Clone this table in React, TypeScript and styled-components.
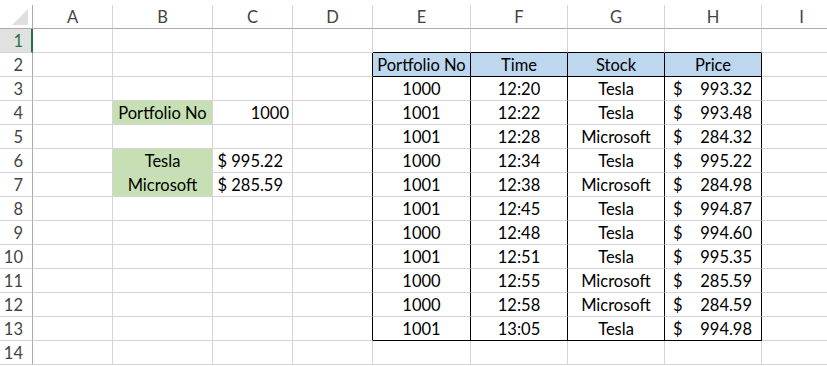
import React from "react";
import styled, { createGlobalStyle } from "styled-components";

const GREEN = "#c6e0b4";
const BLUE = "#bdd7ee";
const GRID = "#d4d4d4";
const HEAD_LINE = "#ababab";

const GlobalStyle = createGlobalStyle`
  html, body {
    margin: 0;
    padding: 0;
    background: #ffffff;
    overflow: hidden;
  }
  body {
    font-family: Lato, "Liberation Sans", sans-serif;
  }
`;

const columns = [
  { name: "A", w: 80 },
  { name: "B", w: 100 },
  { name: "C", w: 80 },
  { name: "D", w: 80 },
  { name: "E", w: 98 },
  { name: "F", w: 97 },
  { name: "G", w: 97 },
  { name: "H", w: 97 },
  { name: "I", w: 80 },
];

const ROW_COUNT = 14;

const Sheet = styled.div`
  display: grid;
  grid-template-columns: 33px ${columns.map((c) => `${c.w}px`).join(" ")};
  grid-auto-rows: 24px;
  margin-top: 5px;
  width: max-content;
  color: #000;
  font-size: 16.5px;
`;

const Corner = styled.div`
  position: relative;
  border-right: 1px solid ${HEAD_LINE};
  border-bottom: 1px solid ${HEAD_LINE};
  box-sizing: border-box;
  &::after {
    content: "";
    position: absolute;
    right: 4px;
    bottom: 3px;
    width: 0;
    height: 0;
    border-left: 16px solid transparent;
    border-bottom: 16px solid #dfdfdf;
  }
`;

const ColHeader = styled.div`
  box-sizing: border-box;
  border-right: 1px solid ${GRID};
  border-bottom: 1px solid ${HEAD_LINE};
  display: flex;
  align-items: center;
  justify-content: center;
  color: #444;
  padding-top: 1px;
`;

const RowHeader = styled.div<{ $active?: boolean }>`
  box-sizing: border-box;
  border-right: ${(p) => (p.$active ? "2px solid #217346" : `1px solid ${HEAD_LINE}`)};
  border-bottom: 1px solid ${GRID};
  background: ${(p) => (p.$active ? "#e1e1e1" : "transparent")};
  color: ${(p) => (p.$active ? "#217346" : "#444")};
  display: flex;
  align-items: center;
  justify-content: flex-end;
  padding-right: ${(p) => (p.$active ? "8px" : "9px")};
  padding-top: 1px;
`;

const Cell = styled.div<{
  $fill?: string;
  $align?: "left" | "center" | "right";
  $padRight?: number;
  $right: boolean;
  $bottom: boolean;
}>`
  box-sizing: border-box;
  border-right: 1px solid ${(p) => (p.$right ? "#000" : GRID)};
  border-bottom: 1px solid ${(p) => (p.$bottom ? "#000" : GRID)};
  background: ${(p) => p.$fill || "transparent"};
  display: flex;
  align-items: center;
  justify-content: ${(p) =>
    p.$align === "center" ? "center" : p.$align === "right" ? "flex-end" : "flex-start"};
  padding: 1px ${(p) => p.$padRight ?? 3}px 0 3px;
  white-space: nowrap;
  overflow: hidden;
`;

const Money = styled.div`
  flex: 1;
  display: flex;
  justify-content: space-between;
  padding: 0 6px 0 5px;
`;

type CellData = {
  v: string;
  align?: "left" | "center" | "right";
  fill?: string;
  padRight?: number;
  money?: boolean;
};

const trades = [
  ["1000", "12:20", "Tesla", "993.32"],
  ["1001", "12:22", "Tesla", "993.48"],
  ["1001", "12:28", "Microsoft", "284.32"],
  ["1000", "12:34", "Tesla", "995.22"],
  ["1001", "12:38", "Microsoft", "284.98"],
  ["1001", "12:45", "Tesla", "994.87"],
  ["1000", "12:48", "Tesla", "994.60"],
  ["1001", "12:51", "Tesla", "995.35"],
  ["1000", "12:55", "Microsoft", "285.59"],
  ["1000", "12:58", "Microsoft", "284.59"],
  ["1001", "13:05", "Tesla", "994.98"],
];

const cells: Record<string, CellData> = {
  B4: { v: "Portfolio No", align: "center", fill: GREEN },
  C4: { v: "1000", align: "right" },
  B6: { v: "Tesla", align: "center", fill: GREEN },
  B7: { v: "Microsoft", align: "center", fill: GREEN },
  C6: { v: "$ 995.22", align: "right", padRight: 9 },
  C7: { v: "$ 285.59", align: "right", padRight: 9 },
};

["Portfolio No", "Time", "Stock", "Price"].forEach((h, i) => {
  cells[`${"EFGH"[i]}2`] = { v: h, align: "center", fill: BLUE };
});
trades.forEach((t, r) => {
  t.forEach((v, i) => {
    cells[`${"EFGH"[i]}${r + 3}`] =
      i === 3 ? { v, money: true } : { v, align: "center" };
  });
});

// table E2:H13 -> column index 4..7, rows 2..13
const inTable = (c: number, r: number) => c >= 4 && c <= 7 && r >= 2 && r <= 13;

export default function App() {
  const rows = Array.from({ length: ROW_COUNT }, (_, i) => i + 1);
  return (
    <>
      <GlobalStyle />
      <Sheet>
        <Corner />
        {columns.map((c) => (
          <ColHeader key={c.name}>{c.name}</ColHeader>
        ))}
        {rows.map((r) => (
          <React.Fragment key={r}>
            <RowHeader $active={r === 1}>{r}</RowHeader>
            {columns.map((col, c) => {
              const data = cells[`${col.name}${r}`];
              const right = inTable(c, r) || inTable(c + 1, r);
              const bottom =
                (inTable(c, r) && (r === 2 || r === 13)) || (r === 1 && inTable(c, 2));
              return (
                <Cell
                  key={col.name}
                  $fill={data?.fill}
                  $align={data?.align}
                  $padRight={data?.padRight}
                  $right={right}
                  $bottom={bottom}
                >
                  {data?.money ? (
                    <Money>
                      <span>$</span>
                      <span>{data.v}</span>
                    </Money>
                  ) : (
                    data?.v
                  )}
                </Cell>
              );
            })}
          </React.Fragment>
        ))}
      </Sheet>
    </>
  );
}
